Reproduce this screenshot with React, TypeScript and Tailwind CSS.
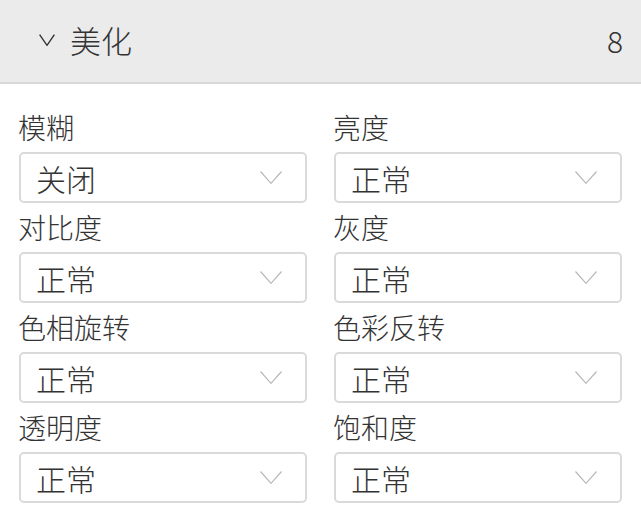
const fields = [
  { label: '模糊', value: '关闭' },
  { label: '亮度', value: '正常' },
  { label: '对比度', value: '正常' },
  { label: '灰度', value: '正常' },
  { label: '色相旋转', value: '正常' },
  { label: '色彩反转', value: '正常' },
  { label: '透明度', value: '正常' },
  { label: '饱和度', value: '正常' },
];

function Chevron({ className }: { className?: string }) {
  return (
    <svg viewBox="0 0 22 13" className={className} fill="none" stroke="currentColor" strokeWidth="1.2">
      <path d="M0.5 0.5 L11 12.3 L21.5 0.5" />
    </svg>
  );
}

export default function App() {
  return (
    <div
      className="w-[641px] h-[522px] bg-white text-[#333] overflow-hidden font-light"
      style={{ fontFamily: '"Noto Sans CJK SC", "Noto Sans", sans-serif' }}
    >
      <div className="h-[84px] bg-[#ebebeb] border-b-2 border-[#d8d8d8] flex items-center pl-[39px] pr-[18px] pb-[3px]">
        <svg viewBox="0 0 16 12" className="w-[16px] h-[12px] shrink-0 text-[#333]" fill="none" stroke="currentColor" strokeWidth="1.4">
          <path d="M0.6 0.6 L8 11.3 L15.4 0.6" />
        </svg>
        <span className="ml-[15px] text-[31px] leading-none">美化</span>
        <span className="ml-auto text-[30px] leading-none">8</span>
      </div>
      <div className="grid grid-cols-2 gap-x-[27px] px-[19px] pt-[19px]">
        {fields.map((f) => (
          <div key={f.label} className="flex flex-col">
            <div className="h-[49px] text-[28px] leading-[49px] -ml-[1px]">{f.label}</div>
            <div className="h-[51px] border-2 border-[#dadada] rounded-[5px] flex items-center pl-[15px] pr-[23px]">
              <span className="text-[30px] leading-none">{f.value}</span>
              <Chevron className="ml-auto w-[22px] h-[13px] shrink-0 text-[#b8b8b8]" />
            </div>
          </div>
        ))}
      </div>
    </div>
  );
}
